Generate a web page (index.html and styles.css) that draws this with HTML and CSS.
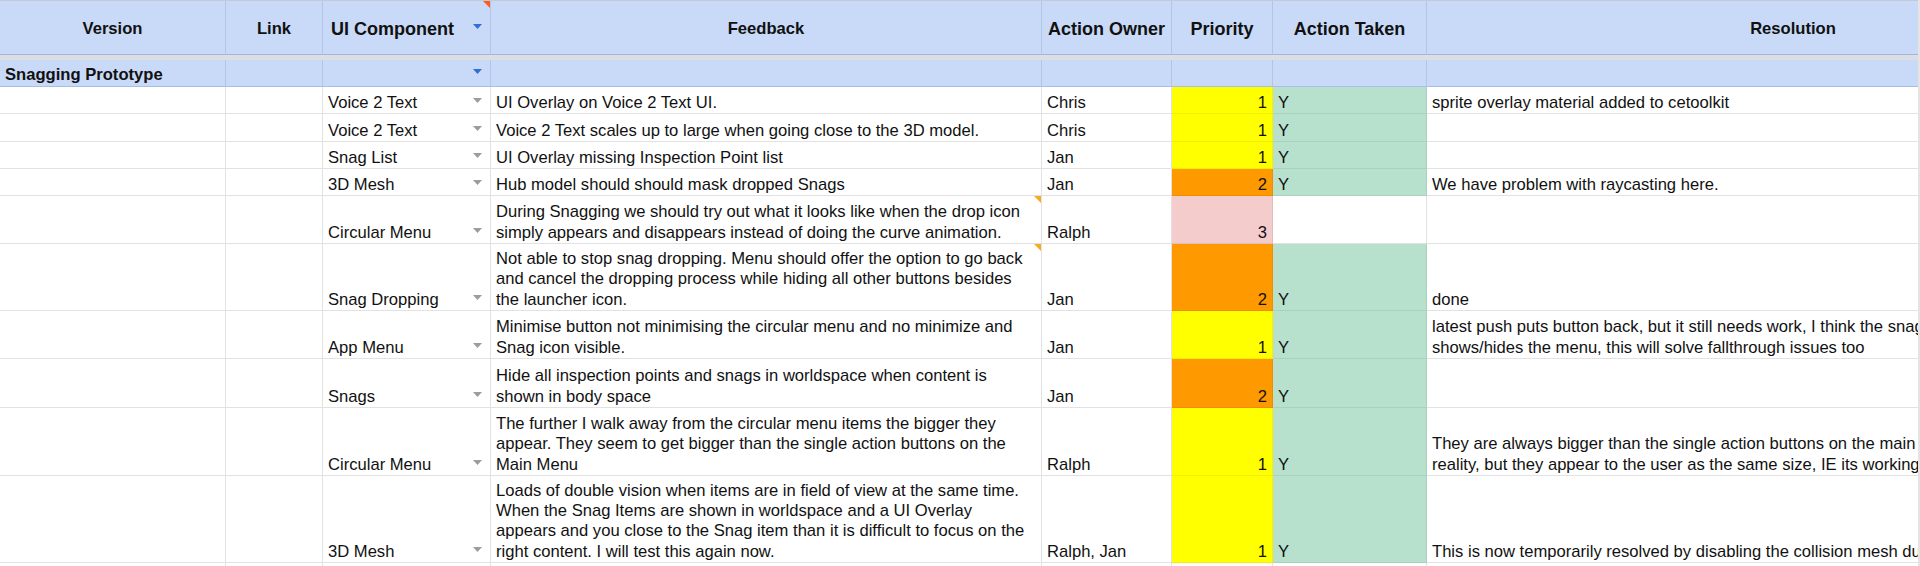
FILE: index.html
```html
<!DOCTYPE html>
<html lang="en">
<head>
<meta charset="utf-8">
<title>Snagging Feedback</title>
<link rel="stylesheet" href="styles.css">
</head>
<body>
<div class="sheet">
  <div class="row head">
    <div class="c">Version</div>
    <div class="c">Link</div>
    <div class="c comp big"><span>UI Component</span><svg class="dd hd" width="9" height="5" viewBox="0 0 9 5"><path d="M0 0H9L4.5 5Z"/></svg><span class="note red"></span></div>
    <div class="c">Feedback</div>
    <div class="c big">Action Owner</div>
    <div class="c big">Priority</div>
    <div class="c big">Action Taken</div>
    <div class="c">Resolution</div>
  </div>
  <div class="freeze"></div>
  <div class="row group">
    <div class="c">Snagging Prototype</div>
    <div class="c"></div>
    <div class="c comp"><span></span><svg class="dd gd" width="9" height="5" viewBox="0 0 9 5"><path d="M0 0H9L4.5 5Z"/></svg></div>
    <div class="c"></div>
    <div class="c"></div>
    <div class="c"></div>
    <div class="c"></div>
    <div class="c"></div>
  </div>

  <div class="row r27">
    <div class="c"></div><div class="c"></div>
    <div class="c comp"><span>Voice 2 Text</span><svg class="dd" width="9" height="5" viewBox="0 0 9 5"><path d="M0 0H9L4.5 5Z"/></svg></div>
    <div class="c">UI Overlay on Voice 2 Text UI.</div>
    <div class="c">Chris</div>
    <div class="c num yl">1</div>
    <div class="c gr">Y</div>
    <div class="c">sprite overlay material added to cetoolkit</div>
  </div>

  <div class="row r28">
    <div class="c"></div><div class="c"></div>
    <div class="c comp"><span>Voice 2 Text</span><svg class="dd" width="9" height="5" viewBox="0 0 9 5"><path d="M0 0H9L4.5 5Z"/></svg></div>
    <div class="c">Voice 2 Text scales up to large when going close to the 3D model.</div>
    <div class="c">Chris</div>
    <div class="c num yl">1</div>
    <div class="c gr">Y</div>
    <div class="c"></div>
  </div>

  <div class="row r27">
    <div class="c"></div><div class="c"></div>
    <div class="c comp"><span>Snag List</span><svg class="dd" width="9" height="5" viewBox="0 0 9 5"><path d="M0 0H9L4.5 5Z"/></svg></div>
    <div class="c">UI Overlay missing Inspection Point list</div>
    <div class="c">Jan</div>
    <div class="c num yl">1</div>
    <div class="c gr">Y</div>
    <div class="c"></div>
  </div>

  <div class="row r27">
    <div class="c"></div><div class="c"></div>
    <div class="c comp"><span>3D Mesh</span><svg class="dd" width="9" height="5" viewBox="0 0 9 5"><path d="M0 0H9L4.5 5Z"/></svg></div>
    <div class="c">Hub model should should mask dropped Snags</div>
    <div class="c">Jan</div>
    <div class="c num or">2</div>
    <div class="c gr">Y</div>
    <div class="c">We have problem with raycasting here.</div>
  </div>

  <div class="row r48">
    <div class="c"></div><div class="c"></div>
    <div class="c comp"><span>Circular Menu</span><svg class="dd" width="9" height="5" viewBox="0 0 9 5"><path d="M0 0H9L4.5 5Z"/></svg></div>
    <div class="c"><span>During Snagging we should try out what it looks like when the drop icon<br>simply appears and disappears instead of doing the curve animation.</span><span class="note"></span></div>
    <div class="c">Ralph</div>
    <div class="c num pk">3</div>
    <div class="c"></div>
    <div class="c"></div>
  </div>

  <div class="row r67">
    <div class="c"></div><div class="c"></div>
    <div class="c comp"><span>Snag Dropping</span><svg class="dd" width="9" height="5" viewBox="0 0 9 5"><path d="M0 0H9L4.5 5Z"/></svg></div>
    <div class="c"><span>Not able to stop snag dropping. Menu should offer the option to go back<br>and cancel the dropping process while hiding all other buttons besides<br>the launcher icon.</span><span class="note"></span></div>
    <div class="c">Jan</div>
    <div class="c num or">2</div>
    <div class="c gr">Y</div>
    <div class="c">done</div>
  </div>

  <div class="row r48">
    <div class="c"></div><div class="c"></div>
    <div class="c comp"><span>App Menu</span><svg class="dd" width="9" height="5" viewBox="0 0 9 5"><path d="M0 0H9L4.5 5Z"/></svg></div>
    <div class="c"><span>Minimise button not minimising the circular menu and no minimize and<br>Snag icon visible.</span></div>
    <div class="c">Jan</div>
    <div class="c num yl">1</div>
    <div class="c gr">Y</div>
    <div class="c"><span>latest push puts button back, but it still needs work, I think the snag<br>shows/hides the menu, this will solve fallthrough issues too</span></div>
  </div>

  <div class="row r49">
    <div class="c"></div><div class="c"></div>
    <div class="c comp"><span>Snags</span><svg class="dd" width="9" height="5" viewBox="0 0 9 5"><path d="M0 0H9L4.5 5Z"/></svg></div>
    <div class="c"><span>Hide all inspection points and snags in worldspace when content is<br>shown in body space</span></div>
    <div class="c">Jan</div>
    <div class="c num or">2</div>
    <div class="c gr">Y</div>
    <div class="c"></div>
  </div>

  <div class="row r68">
    <div class="c"></div><div class="c"></div>
    <div class="c comp"><span>Circular Menu</span><svg class="dd" width="9" height="5" viewBox="0 0 9 5"><path d="M0 0H9L4.5 5Z"/></svg></div>
    <div class="c"><span>The further I walk away from the circular menu items the bigger they<br>appear. They seem to get bigger than the single action buttons on the<br>Main Menu</span></div>
    <div class="c">Ralph</div>
    <div class="c num yl">1</div>
    <div class="c gr">Y</div>
    <div class="c"><span>They are always bigger than the single action buttons on the main<br>reality, but they appear to the user as the same size, IE its working</span></div>
  </div>

  <div class="row r87">
    <div class="c"></div><div class="c"></div>
    <div class="c comp"><span>3D Mesh</span><svg class="dd" width="9" height="5" viewBox="0 0 9 5"><path d="M0 0H9L4.5 5Z"/></svg></div>
    <div class="c"><span>Loads of double vision when items are in field of view at the same time.<br>When the Snag Items are shown in worldspace and a UI Overlay<br>appears and you close to the Snag item than it is difficult to focus on the<br>right content. I will test this again now.</span></div>
    <div class="c">Ralph, Jan</div>
    <div class="c num yl">1</div>
    <div class="c gr">Y</div>
    <div class="c">This is now temporarily resolved by disabling the collision mesh during</div>
  </div>

  <div class="row r27">
    <div class="c"></div><div class="c"></div><div class="c"></div><div class="c"></div>
    <div class="c"></div><div class="c"></div><div class="c"></div><div class="c"></div>
  </div>
</div>
</body>
</html>
```

FILE: styles.css
```css
:root {
  --cols: 226px 97px 168px 551px 130px 101px 154px 733px;
  --grid: #e2e2e2;
  --hdr: #c9daf8;
  --hdr-line: #b2c5e8;
}

html, body {
  margin: 0;
  height: 566px;
  overflow: hidden;
}

html {
  background: #e4e4e4;
}

body {
  font-family: "Liberation Sans", Arial, Helvetica, sans-serif;
  font-size: 16.6px;
  color: #111;
}

.sheet {
  width: 1918px;
  overflow: hidden;
  background: #fff;
}

.row {
  display: grid;
  grid-template-columns: var(--cols);
  box-sizing: border-box;
}

.c {
  box-sizing: border-box;
  position: relative;
  display: flex;
  align-items: flex-end;
  min-width: 0;
  padding: 0 5px;
  border-right: 1px solid var(--grid);
  border-bottom: 1px solid var(--grid);
  white-space: nowrap;
  line-height: 20.3px;
}

/* header */
.head {
  height: 55px;
  border-top: 1px solid #c2cad8;
}

.head .c {
  background: var(--hdr);
  border-right-color: var(--hdr-line);
  border-bottom-color: #9fb5dd;
  justify-content: center;
  align-items: center;
  padding-top: 3px;
  font-weight: bold;
}

.head .big {
  font-size: 18px;
}

.head .comp {
  justify-content: space-between;
  padding-left: 8px;
  padding-right: 8px;
}

.freeze {
  height: 5px;
  background: #dcdee3;
}

.group {
  height: 27px;
}

.group .c {
  background: var(--hdr);
  border-right-color: var(--hdr-line);
  border-bottom-color: #aabee3;
  font-weight: bold;
  padding-bottom: 1px;
}

/* row heights */
.r27 { height: 27px; }
.r28 { height: 28px; }
.r48 { height: 48px; }
.r49 { height: 49px; }
.r67 { height: 67px; }
.r68 { height: 68px; }
.r87 { height: 87px; }

/* component dropdown cells */
.comp {
  justify-content: space-between;
  padding-right: 8px;
}

.dd {
  flex: none;
  margin-bottom: 10px;
  fill: #9c9c9c;
}

.dd.hd {
  fill: #2f6fd6;
  margin-bottom: 5px;
}

.dd.gd {
  fill: #2f6fd6;
  margin-bottom: 11px;
}

/* numeric cells */
.num {
  justify-content: flex-end;
}

/* fills */
.yl { background: #ffff00; border-color: rgba(0, 0, 0, 0.06); }
.or { background: #ff9900; border-color: rgba(0, 0, 0, 0.07); }
.pk { background: #f4cccc; border-color: rgba(0, 0, 0, 0.07); }
.gr { background: #b7e1cd; border-color: rgba(0, 0, 0, 0.07); }

/* comment indicators */
.note {
  position: absolute;
  top: 0;
  right: 0;
  width: 0;
  height: 0;
  border-top: 7px solid #f4ac1d;
  border-left: 7px solid transparent;
}

.note.red {
  border-top: 7px solid #ff5a1f;
  border-left: 7px solid transparent;
}
```
